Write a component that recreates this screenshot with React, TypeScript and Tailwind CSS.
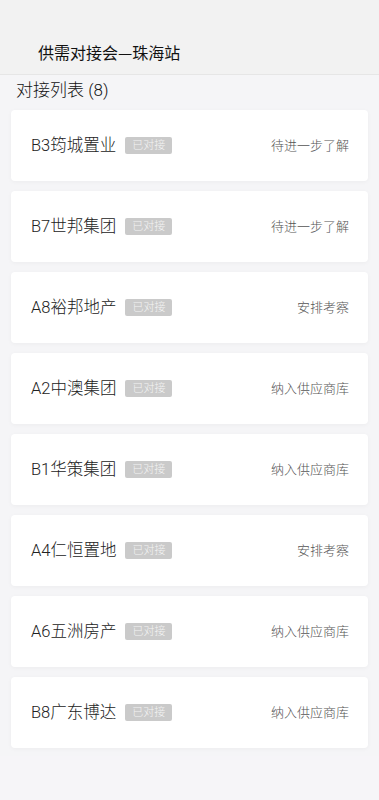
import React from "react";

const items: { name: string; status: string }[] = [
  { name: "B3筠城置业", status: "待进一步了解" },
  { name: "B7世邦集团", status: "待进一步了解" },
  { name: "A8裕邦地产", status: "安排考察" },
  { name: "A2中澳集团", status: "纳入供应商库" },
  { name: "B1华策集团", status: "纳入供应商库" },
  { name: "A4仁恒置地", status: "安排考察" },
  { name: "A6五洲房产", status: "纳入供应商库" },
  { name: "B8广东博达", status: "纳入供应商库" },
];

export default function App() {
  return (
    <div
      className="flex min-h-[800px] w-full flex-col bg-[#f6f5f8] font-light"
      style={{ fontFamily: 'Roboto, "Noto Sans CJK SC", sans-serif' }}
    >
      <div className="flex h-[75px] items-end border-b border-[#e6e6e6] bg-[#f2f2f2] pb-[10px] pl-[38px]">
        <span
          className="text-[16px] font-normal leading-[24px] text-[#111]"
          style={{ fontFamily: '"Noto Sans CJK SC", sans-serif' }}
        >
          供需对接会—珠海站
        </span>
      </div>
      <div className="flex flex-col bg-[#f5f5f7] pb-[8px]">
        <div className="pl-[16px] pt-[3px] text-[17px] leading-[24px] text-[#111]">对接列表 (8)</div>
        <div className="mt-[8px] flex flex-col gap-[10px] px-[11px]">
          {items.map((it) => (
            <div
              key={it.name}
              className="flex h-[71px] items-center justify-between rounded-[4px] bg-white pl-[20px] pr-[19px] shadow-[0_1px_4px_rgba(0,0,0,0.04)]"
            >
              <div className="flex items-center">
                <span className="text-[16.5px] leading-[22px] text-[#222]">{it.name}</span>
                <span className="ml-[9px] flex h-[17px] items-center rounded-[2px] bg-[#cacaca] px-[7px] text-[11px] leading-none text-[#f4f4f4]">
                  已对接
                </span>
              </div>
              <span className="text-[13px] leading-[20px] text-[#555]">{it.status}</span>
            </div>
          ))}
        </div>
      </div>
      <div className="flex-1 bg-[#f6f5f8]" />
    </div>
  );
}
